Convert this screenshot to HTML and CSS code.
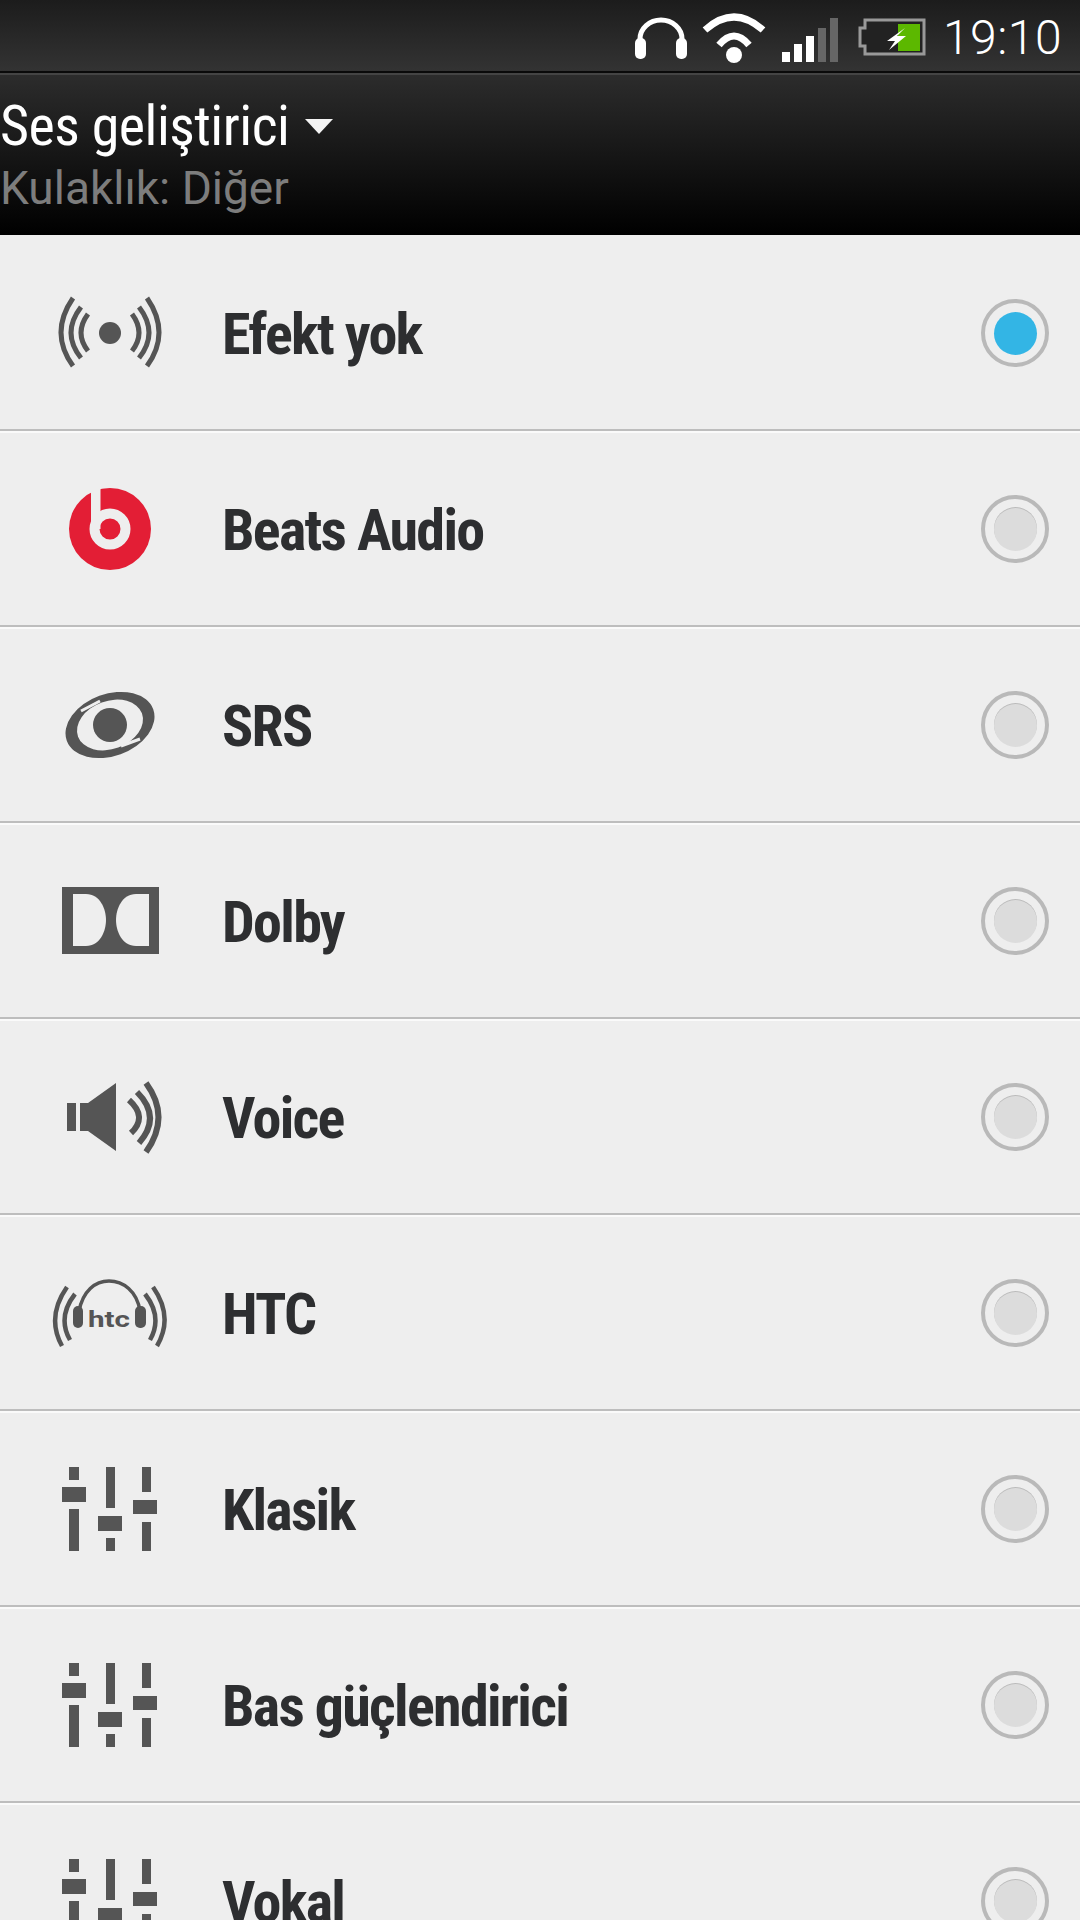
FILE: index.html
```html
<!DOCTYPE html>
<html lang="tr">
<head>
    <meta charset="UTF-8">
    <title>Ses geliştirici</title>
    <link rel="stylesheet" href="styles.css">
</head>
<body>
    <svg class="defs" width="0" height="0">
        <symbol id="eq" viewBox="0 0 96 84">
            <rect x="7" y="0" width="10" height="13"/>
            <rect x="0" y="20" width="24" height="15"/>
            <rect x="7" y="42" width="10" height="42"/>
            <rect x="44" y="0" width="9" height="41"/>
            <rect x="36" y="49" width="24" height="15"/>
            <rect x="44" y="71" width="9" height="13"/>
            <rect x="80" y="0" width="9" height="25"/>
            <rect x="71" y="33" width="24" height="14"/>
            <rect x="80" y="55" width="9" height="29"/>
        </symbol>
    </svg>

    <div class="status-bar">
        <svg class="st-head" width="52" height="42" viewBox="0 0 52 42">
            <path d="M5 26V22a21 19 0 0 1 42 0v4" fill="none" stroke="#fff" stroke-width="5"/>
            <rect x="0" y="21" width="11" height="21" rx="5" fill="#fff"/>
            <rect x="41" y="21" width="11" height="21" rx="5" fill="#fff"/>
        </svg>
        <svg class="st-wifi" width="64" height="52" viewBox="0 0 64 52" fill="none" stroke="#fff" stroke-width="7">
            <path d="M3 18Q32 -8 61 18"/>
            <path d="M17 33Q32 15 47 33"/>
            <circle cx="32" cy="43" r="8" fill="#fff" stroke="none"/>
        </svg>
        <svg class="st-signal" width="56" height="44" viewBox="0 0 56 44">
            <rect x="0" y="34" width="8" height="10" fill="#fff"/>
            <rect x="12" y="26" width="8" height="18" fill="#fff"/>
            <rect x="24" y="18" width="8" height="26" fill="#fff"/>
            <rect x="36" y="10" width="8" height="34" fill="#666"/>
            <rect x="48" y="0" width="8" height="44" fill="#666"/>
        </svg>
        <svg class="st-battery" width="68" height="38" viewBox="0 0 68 38">
            <path d="M7 2H66V36H7V28H2V10H7Z" fill="#222" stroke="#999" stroke-width="3"/>
            <rect x="40" y="6" width="22" height="27" fill="#5cb800"/>
            <path d="M47 10L29 23H37L31 32L48 18H39L47 10Z" fill="#fff"/>
        </svg>
        <span class="clock">19:10</span>
    </div>

    <div class="action-bar">
        <div class="title-line">
            <span class="title">Ses geliştirici</span>
            <span class="caret"></span>
        </div>
        <div class="subtitle">Kulaklık: Diğer</div>
    </div>

    <div class="list">
        <div class="row">
            <svg class="icon" width="120" height="100" viewBox="0 0 120 100" fill="none" stroke="#555" stroke-width="5">
                <circle cx="60" cy="50" r="11" fill="#555" stroke="none"/>
                <path d="M38 31Q24 50 38 68M31 24Q11 50 31 75M23 15Q-1 50 23 83"/>
                <path d="M82 31Q96 50 82 68M89 24Q109 50 89 75M97 15Q121 50 97 83"/>
            </svg>
            <span class="label">Efekt yok</span>
            <span class="radio on"></span>
        </div>
        <div class="row">
            <svg class="icon" width="120" height="100" viewBox="0 0 120 100">
                <circle cx="60" cy="50" r="41" fill="#e31e35"/>
                <circle cx="60" cy="50" r="15.5" fill="none" stroke="#eee" stroke-width="10"/>
                <rect x="41" y="0" width="9.5" height="50" fill="#eee"/>
            </svg>
            <span class="label">Beats Audio</span>
            <span class="radio"></span>
        </div>
        <div class="row">
            <svg class="icon" width="120" height="100" viewBox="0 0 120 100">
                <ellipse cx="60" cy="50" rx="46" ry="31" fill="#555" transform="rotate(-20 60 50)"/>
                <ellipse cx="60" cy="50" rx="34" ry="24" fill="#eee" transform="rotate(-20 60 50)"/>
                <circle cx="60" cy="50" r="17" fill="#555"/>
                <path d="M31 36L50 26M71 71L90 64" stroke="#eee" stroke-width="3" fill="none"/>
            </svg>
            <span class="label">SRS</span>
            <span class="radio"></span>
        </div>
        <div class="row">
            <svg class="icon" width="120" height="100" viewBox="0 0 120 100">
                <rect x="12" y="16" width="97" height="67" fill="#555"/>
                <path fill="#eee" d="M23 23H36C50 23 56 38 56 49C56 60 50 75 36 75H23Z"/>
                <path fill="#eee" d="M99 23H86C72 23 66 38 66 49C66 60 72 75 86 75H99Z"/>
            </svg>
            <span class="label">Dolby</span>
            <span class="radio"></span>
        </div>
        <div class="row">
            <svg class="icon" width="120" height="100" viewBox="0 0 120 100" fill="#555">
                <rect x="17" y="36" width="9" height="28"/>
                <path d="M30 36H38L66 16V84L38 64H30Z"/>
                <path d="M79 33Q98 50 81 66M87 25Q112 50 89 76M96 16Q121 50 96 85" fill="none" stroke="#555" stroke-width="6"/>
            </svg>
            <span class="label">Voice</span>
            <span class="radio"></span>
        </div>
        <div class="row">
            <svg class="icon" width="120" height="100" viewBox="0 0 120 100" fill="none" stroke="#555">
                <path d="M29 48C33 28 45 18 59 18C73 18 87 28 90 48" stroke-width="3.5"/>
                <rect x="23" y="43" width="10" height="22" rx="5" fill="#555" stroke="none"/>
                <rect x="85" y="43" width="11" height="22" rx="5" fill="#555" stroke="none"/>
                <path d="M25 31Q7 54 20 77M17 24Q-4 54 12 83M95 31Q113 54 100 77M103 24Q124 54 107 83" stroke-width="4.5"/>
                <text class="htc-text" x="38" y="64" textLength="42" lengthAdjust="spacingAndGlyphs">htc</text>
            </svg>
            <span class="label">HTC</span>
            <span class="radio"></span>
        </div>
        <div class="row">
            <svg class="icon eq" width="96" height="84"><use href="#eq"/></svg>
            <span class="label">Klasik</span>
            <span class="radio"></span>
        </div>
        <div class="row">
            <svg class="icon eq" width="96" height="84"><use href="#eq"/></svg>
            <span class="label">Bas güçlendirici</span>
            <span class="radio"></span>
        </div>
        <div class="row">
            <svg class="icon eq" width="96" height="84"><use href="#eq"/></svg>
            <span class="label">Vokal</span>
            <span class="radio"></span>
        </div>
    </div>
</body>
</html>
```

FILE: styles.css
```css
html, body {
    margin: 0;
    padding: 0;
    height: 1920px;
    overflow: hidden;
}
body {
    font-family: Roboto, "Liberation Sans", sans-serif;
    background-color: #eeeeee;
}
.defs {
    display: block;
    height: 0;
}
.status-bar {
    height: 71px;
    display: flex;
    align-items: flex-start;
    justify-content: flex-end;
    padding-right: 18px;
    background: linear-gradient(#1c1c1c, #333333);
    border-bottom: 2px solid #0a0a0a;
}
.status-bar svg {
    flex-shrink: 0;
}
.st-head {
    margin: 17px 15px 0 0;
}
.st-wifi {
    margin: 12px 16px 0 0;
}
.st-signal {
    margin: 18px 20px 0 0;
}
.st-battery {
    margin: 18px 17px 0 0;
}
.clock {
    color: #fff;
    font-size: 48px;
    font-weight: 300;
    letter-spacing: 0.5px;
    line-height: 76px;
}
.action-bar {
    height: 162px;
    box-sizing: border-box;
    border-top: 2px solid #444;
    background: linear-gradient(#2c2c2c, #000000);
    padding-top: 22px;
}
.title-line {
    display: flex;
    align-items: center;
    height: 58px;
}
.title {
    color: #fff;
    font-size: 56px;
    font-stretch: 75%;
    letter-spacing: -0.5px;
    line-height: 58px;
}
.caret {
    width: 0;
    height: 0;
    margin-left: 16px;
    border-left: 14px solid transparent;
    border-right: 14px solid transparent;
    border-top: 15px solid #f4f4f4;
}
.subtitle {
    color: #7d7d7d;
    font-size: 46px;
    line-height: 52px;
    margin-top: 7px;
}
.row {
    height: 196px;
    box-sizing: border-box;
    display: flex;
    align-items: center;
    border-bottom: 2px solid #bdbdbd;
    border-top: 2px solid #fafafa;
}
.row:first-child {
    border-top-color: #eeeeee;
}
.icon {
    margin-left: 50px;
    flex-shrink: 0;
}
.icon.eq {
    margin-left: 62px;
    margin-right: 12px;
    fill: #555;
}
.htc-text {
    font-size: 22px;
    font-weight: 700;
    fill: #555;
    stroke: none;
}
.label {
    margin-left: 52px;
    padding-top: 2px;
    font-size: 58px;
    font-weight: 700;
    font-stretch: 75%;
    letter-spacing: -1.7px;
    color: #2d2e30;
    flex-grow: 1;
}
.radio {
    width: 68px;
    height: 68px;
    box-sizing: border-box;
    margin-right: 31px;
    border: 4px solid #b9b9b9;
    border-radius: 50%;
    display: flex;
    align-items: center;
    justify-content: center;
    flex-shrink: 0;
}
.radio::after {
    content: "";
    width: 43px;
    height: 43px;
    border-radius: 50%;
    background-color: #dcdcdc;
    box-shadow: 0 -1px 0 #bbbbbb;
}
.radio.on::after {
    background-color: #33b5e5;
    box-shadow: none;
}
```
